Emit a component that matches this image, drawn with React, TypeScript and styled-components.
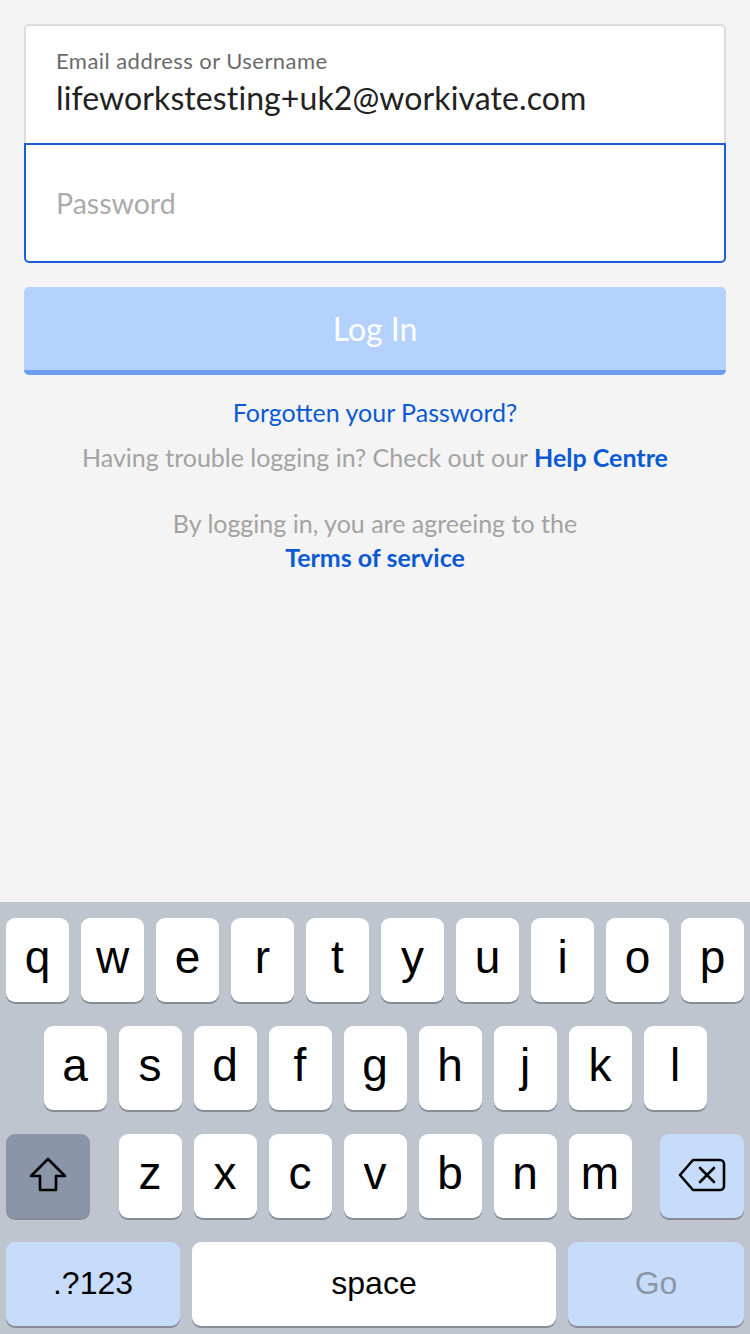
import React from "react";
import styled, { createGlobalStyle } from "styled-components";

const Global = createGlobalStyle`
  html, body { margin: 0; padding: 0; background: #f4f4f4; }
  * { box-sizing: border-box; }
`;

const Page = styled.div`
  width: 750px;
  height: 1334px;
  display: flex;
  flex-direction: column;
  background: #f4f4f4;
  font-family: Lato, "Open Sans", sans-serif;
  overflow: hidden;
`;

const Content = styled.div`
  padding: 24px 24px 0;
  display: flex;
  flex-direction: column;
`;

const Card = styled.div`
  display: flex;
  flex-direction: column;
`;

const EmailField = styled.div`
  height: 119px;
  border: 2px solid #dcdcdc;
  border-bottom: none;
  border-radius: 5px 5px 0 0;
  background: #fff;
  padding: 22px 30px 0;
  display: flex;
  flex-direction: column;
`;

const Label = styled.div`
  font-size: 22px;
  line-height: 26px;
  color: #6a6a6a;
  letter-spacing: 0.45px;
`;

const Value = styled.div`
  margin-top: 5px;
  font-size: 32px;
  line-height: 38px;
  color: #222;
  letter-spacing: 0.1px;
`;

const PasswordField = styled.div`
  height: 120px;
  border: 2px solid #1a5fd9;
  border-radius: 0 0 5px 5px;
  background: #fff;
  padding: 0 30px;
  display: flex;
  align-items: center;
`;

const Placeholder = styled.div`
  font-size: 28.5px;
  line-height: 34px;
  color: #ababab;
`;

const LoginButton = styled.div`
  margin-top: 24px;
  height: 88px;
  background: #b4d2fd;
  border-bottom: 5px solid #6d9ef0;
  border-radius: 5px;
  display: flex;
  align-items: center;
  justify-content: center;
  color: #fff;
  font-size: 32px;
  line-height: 38px;
`;

const Links = styled.div`
  display: flex;
  flex-direction: column;
  align-items: center;
  text-align: center;
`;

const TextLine = styled.div<{ $top: number; $lh: number }>`
  margin-top: ${(p) => p.$top}px;
  font-size: 25px;
  line-height: ${(p) => p.$lh}px;
  color: #a3a3a3;
`;

const Link = styled.span<{ $bold?: boolean }>`
  color: #0a5ad6;
  font-weight: ${(p) => (p.$bold ? 700 : 400)};
`;

const Keyboard = styled.div`
  margin-top: auto;
  height: 432px;
  background: #bfc5cf;
  padding: 16px 6px 0;
  display: flex;
  flex-direction: column;
  gap: 24px;
`;

const Row = styled.div<{ $justify?: string }>`
  display: flex;
  justify-content: ${(p) => p.$justify || "center"};
  gap: 12px;
`;

const Group = styled.div`
  display: flex;
  gap: 12px;
`;

const Key = styled.div<{ $w?: number; $bg?: string; $color?: string; $size?: number }>`
  width: ${(p) => p.$w || 63}px;
  height: 84px;
  flex: none;
  border-radius: 9px;
  background: ${(p) => p.$bg || "#fff"};
  box-shadow: 0 2px 0 #878d97;
  display: flex;
  align-items: center;
  justify-content: center;
  font-family: "Liberation Sans", Arial, sans-serif;
  font-size: ${(p) => p.$size || 46}px;
  color: ${(p) => p.$color || "#000"};
  padding-bottom: ${(p) => (p.$size ? 2 : 6)}px;
`;

const ShiftIcon = () => (
  <svg width="40" height="36" viewBox="0 0 40 36" fill="none">
    <path
      d="M20 2 L37 19 H28 V33 H12 V19 H3 Z"
      stroke="#000"
      strokeWidth="2.6"
      strokeLinejoin="round"
    />
  </svg>
);

const DeleteIcon = () => (
  <svg width="48" height="34" viewBox="0 0 48 34" fill="none">
    <path
      d="M15 2 H42 A4 4 0 0 1 46 6 V28 A4 4 0 0 1 42 32 H15 L2 17 Z"
      stroke="#000"
      strokeWidth="2.6"
      strokeLinejoin="round"
    />
    <path d="M22 10 L36 24 M36 10 L22 24" stroke="#000" strokeWidth="2.6" strokeLinecap="round" />
  </svg>
);

const row1 = ["q", "w", "e", "r", "t", "y", "u", "i", "o", "p"];
const row2 = ["a", "s", "d", "f", "g", "h", "j", "k", "l"];
const row3 = ["z", "x", "c", "v", "b", "n", "m"];

export default function App() {
  return (
    <Page>
      <Global />
      <Content>
        <Card>
          <EmailField>
            <Label>Email address or Username</Label>
            <Value>lifeworkstesting+uk2@workivate.com</Value>
          </EmailField>
          <PasswordField>
            <Placeholder>Password</Placeholder>
          </PasswordField>
        </Card>
        <LoginButton>Log In</LoginButton>
        <Links>
          <TextLine $top={22} $lh={30}>
            <Link>Forgotten your Password?</Link>
          </TextLine>
          <TextLine $top={15} $lh={30}>
            Having trouble logging in? Check out our <Link $bold>Help Centre</Link>
          </TextLine>
          <TextLine $top={34} $lh={34}>
            By logging in, you are agreeing to the
          </TextLine>
          <TextLine $top={0} $lh={34}>
            <Link $bold>Terms of service</Link>
          </TextLine>
        </Links>
      </Content>
      <Keyboard>
        <Row>
          {row1.map((k) => (
            <Key key={k}>{k}</Key>
          ))}
        </Row>
        <Row>
          {row2.map((k) => (
            <Key key={k}>{k}</Key>
          ))}
        </Row>
        <Row $justify="space-between">
          <Key $w={84} $bg="#8a96a8" $size={30}>
            <ShiftIcon />
          </Key>
          <Group>
            {row3.map((k) => (
              <Key key={k}>{k}</Key>
            ))}
          </Group>
          <Key $w={84} $bg="#c7dcfb" $size={30}>
            <DeleteIcon />
          </Key>
        </Row>
        <Row>
          <Key $w={174} $bg="#c7dcfb" $size={32}>.?123</Key>
          <Key $w={364} $size={32}>space</Key>
          <Key $w={176} $bg="#c7dcfb" $color="#8b97a8" $size={32}>Go</Key>
        </Row>
      </Keyboard>
    </Page>
  );
}
